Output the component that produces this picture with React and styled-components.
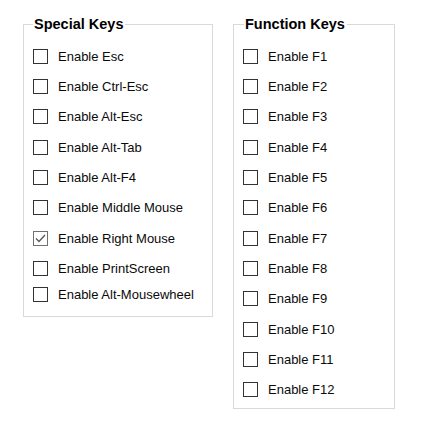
import React from "react";
import styled, { createGlobalStyle } from "styled-components";

const Global = createGlobalStyle`
  html, body { margin: 0; padding: 0; background: #ffffff; }
  body { font-family: "Liberation Sans", Arial, sans-serif; }
`;

const Page = styled.div`
  width: 440px;
  height: 430px;
  box-sizing: border-box;
  padding: 16px 0 0 23px;
  display: flex;
  align-items: flex-start;
  gap: 20px;
  background: #ffffff;
`;

const Group = styled.fieldset`
  margin: 0;
  width: ${(p) => p.$width}px;
  box-sizing: border-box;
  border: 1px solid #d9d9d9;
  padding: 9px 0 ${(p) => p.$padBottom}px ${(p) => p.$padLeft}px;
  min-width: 0;
`;

const Title = styled.legend`
  margin-left: ${(p) => p.$offset}px;
  padding: 0 2px 0 1px;
  font-family: "Liberation Sans", Arial, sans-serif;
  font-weight: bold;
  font-size: 14.5px;
  line-height: 16px;
  color: #000000;
`;

const Row = styled.label`
  display: flex;
  align-items: center;
  height: 30.33px;
  margin-top: ${(p) => (p.$tight ? -4.3 : 0)}px;
  font-size: 13px;
  color: #0a0a0a;
  white-space: nowrap;
`;

const Box = styled.span`
  flex: none;
  width: 15px;
  height: 15px;
  box-sizing: border-box;
  border: 1px solid ${(p) => (p.$checked ? "#707070" : "#333333")};
  background: #ffffff;
  margin-right: 10px;
  display: flex;
  align-items: center;
  justify-content: center;
`;

const Check = ({ checked }) => (
  <Box $checked={checked}>
    {checked && (
      <svg width="13" height="13" viewBox="0 0 13 13">
        <polyline
          points="2,6.5 5,9.5 11,3"
          fill="none"
          stroke="#5a5a5a"
          strokeWidth="1.4"
        />
      </svg>
    )}
  </Box>
);

const special = [
  "Enable Esc",
  "Enable Ctrl-Esc",
  "Enable Alt-Esc",
  "Enable Alt-Tab",
  "Enable Alt-F4",
  "Enable Middle Mouse",
  "Enable Right Mouse",
  "Enable PrintScreen",
  "Enable Alt-Mousewheel",
];

const fkeys = Array.from({ length: 12 }, (_, i) => `Enable F${i + 1}`);

export default function App() {
  return (
    <>
      <Global />
      <Page>
        <Group $width={190} $padLeft={9} $padBottom={6}>
          <Title $offset={0}>Special Keys</Title>
          {special.map((t, i) => (
            <Row key={t} $tight={i === special.length - 1}>
              <Check checked={t === "Enable Right Mouse"} />
              {t}
            </Row>
          ))}
        </Group>
        <Group $width={162} $padLeft={9} $padBottom={3}>
          <Title $offset={1}>Function Keys</Title>
          {fkeys.map((t) => (
            <Row key={t}>
              <Check checked={false} />
              {t}
            </Row>
          ))}
        </Group>
      </Page>
    </>
  );
}
